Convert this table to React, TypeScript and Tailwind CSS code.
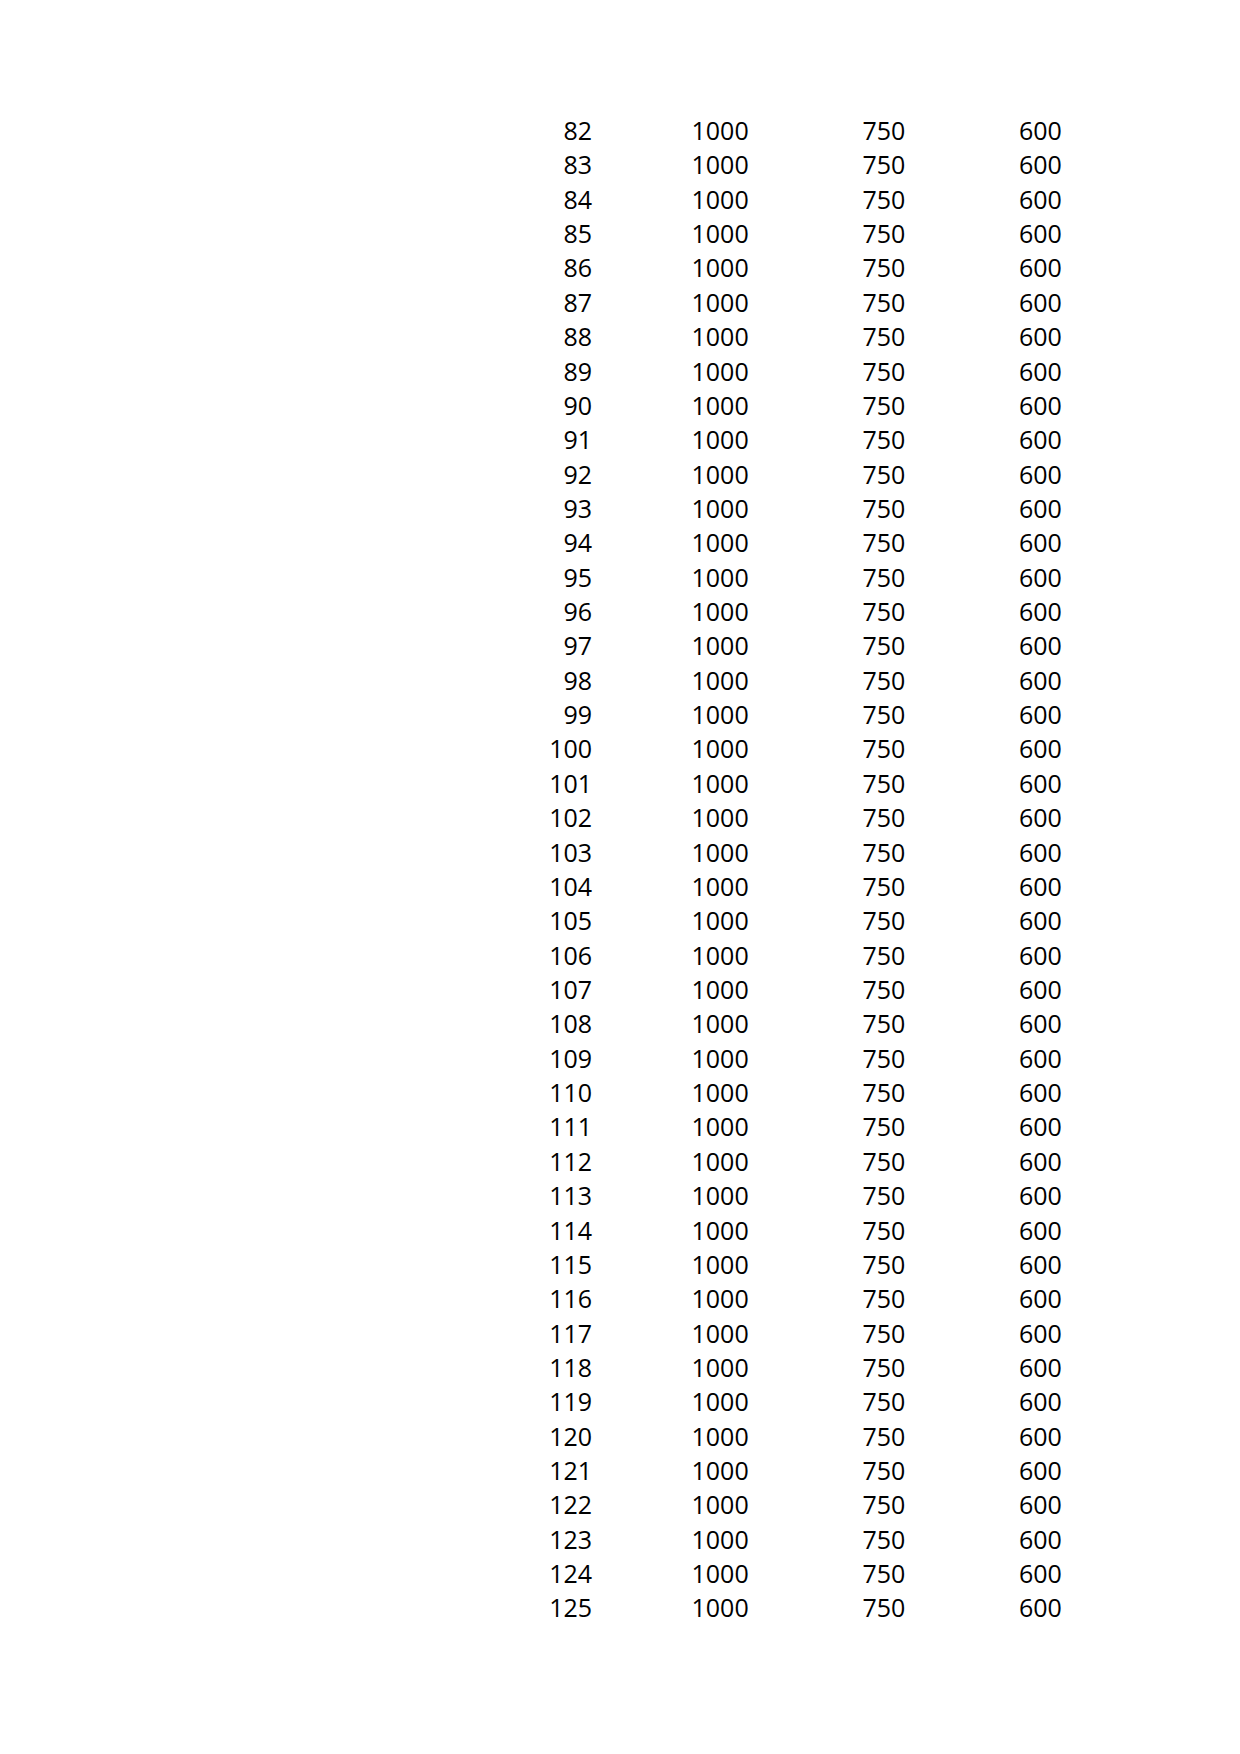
const rows = Array.from({ length: 44 }, (_, i) => 82 + i)

export default function App() {
  return (
    <div className="min-h-[1754px] w-[1240px] bg-white text-black">
      <div
        className="pt-[113px] pl-[435.5px] text-[25px] leading-[34.37px]"
        style={{ fontFamily: '"Open Sans", "Noto Sans", sans-serif' }}
      >
        {rows.map((n) => (
          <div key={n} className="grid h-[34.37px] grid-cols-[repeat(4,156.6px)] text-right">
            <span>{n}</span>
            <span>1000</span>
            <span>750</span>
            <span>600</span>
          </div>
        ))}
      </div>
    </div>
  )
}
